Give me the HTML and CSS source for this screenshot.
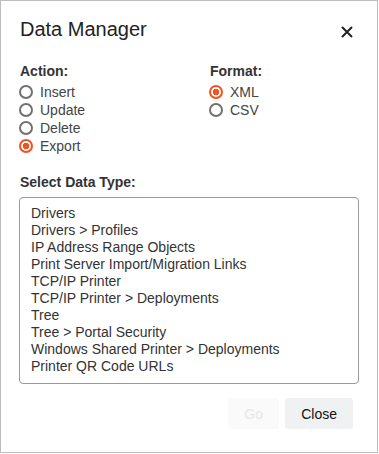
FILE: index.html
```html
<!DOCTYPE html>
<html lang="en">
<head>
  <meta charset="UTF-8">
  <title>Data Manager</title>
  <link rel="stylesheet" href="styles.css">
</head>
<body>
  <div class="dialog">
    <div class="header">
      <h2>Data Manager</h2>
      <button class="close-x" aria-label="Close">
        <svg width="12" height="12" viewBox="0 0 12 12">
          <path d="M1 1 L11 11 M11 1 L1 11" stroke="#222" stroke-width="2" fill="none"/>
        </svg>
      </button>
    </div>

    <div class="options">
      <div class="group">
        <div class="label">Action:</div>
        <label class="radio"><input type="radio" name="action"> Insert</label>
        <label class="radio"><input type="radio" name="action"> Update</label>
        <label class="radio"><input type="radio" name="action"> Delete</label>
        <label class="radio"><input type="radio" name="action" checked> Export</label>
      </div>
      <div class="group">
        <div class="label">Format:</div>
        <label class="radio"><input type="radio" name="format" checked> XML</label>
        <label class="radio"><input type="radio" name="format"> CSV</label>
      </div>
    </div>

    <div class="label type-label">Select Data Type:</div>
    <div class="listbox">
      <div>Drivers</div>
      <div>Drivers &gt; Profiles</div>
      <div>IP Address Range Objects</div>
      <div>Print Server Import/Migration Links</div>
      <div>TCP/IP Printer</div>
      <div>TCP/IP Printer &gt; Deployments</div>
      <div>Tree</div>
      <div>Tree &gt; Portal Security</div>
      <div>Windows Shared Printer &gt; Deployments</div>
      <div>Printer QR Code URLs</div>
    </div>

    <div class="actions">
      <button class="btn go" disabled>Go</button>
      <button class="btn">Close</button>
    </div>
  </div>
</body>
</html>
```

FILE: styles.css
```css
body {
  margin: 0;
  font-family: 'Liberation Sans', Arial, sans-serif;
  background: #fff;
}

.dialog {
  box-sizing: border-box;
  width: 378px;
  height: 453px;
  border: 1px solid #bdbdbd;
  padding: 16px 18px 0 18px;
}

.header {
  display: flex;
  justify-content: space-between;
  align-items: center;
}

h2 {
  margin: 0 0 0 1px;
  font-size: 20px;
  line-height: 24px;
  font-weight: normal;
  color: #222;
}

.close-x {
  border: none;
  background: none;
  padding: 0;
  margin: 6px 6px 0 0;
  width: 12px;
  height: 12px;
  display: flex;
}

.options {
  display: grid;
  grid-template-columns: 190px 1fr;
  margin-top: 22px;
}

.label {
  font-size: 14px;
  line-height: 17px;
  font-weight: bold;
  color: #333;
  margin-left: 1px;
}

.group .label {
  margin-bottom: 3px;
}

.radio {
  display: flex;
  align-items: center;
  height: 18px;
  font-size: 14px;
  color: #444;
}

.radio input {
  appearance: none;
  -webkit-appearance: none;
  box-sizing: border-box;
  width: 14px;
  height: 14px;
  margin: 0 7px 0 0;
  border: 2px solid #707070;
  border-radius: 50%;
  background: #fff;
}

.radio input:checked {
  border-color: #f4511e;
  background: radial-gradient(circle, #f4511e 0 3px, #fff 3.5px);
}

.type-label {
  margin-top: 19px;
}

.listbox {
  margin-top: 6px;
  height: 187px;
  box-sizing: border-box;
  border: 1px solid #999;
  border-radius: 4px;
  padding: 7px 11px;
  font-size: 14px;
  line-height: 17px;
  color: #333;
}

.actions {
  display: flex;
  justify-content: flex-end;
  gap: 6px;
  margin-top: 14px;
  padding-right: 6px;
}

.btn {
  height: 31px;
  border: none;
  border-radius: 3px;
  background: #eff1f3;
  font-family: inherit;
  font-size: 14px;
  color: #111;
  padding: 0 16px;
  min-width: 51px;
}

.btn.go {
  background: #fafafa;
  color: #e6e6e6;
}
```
